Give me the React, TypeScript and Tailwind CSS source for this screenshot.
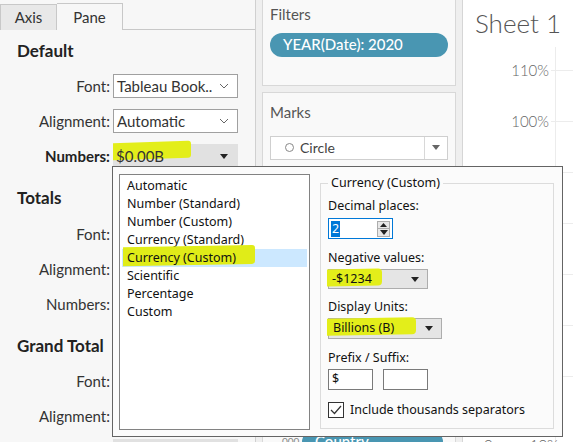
import React from "react";

const lato = { fontFamily: "Lato, 'Open Sans', sans-serif" };
const win = { fontFamily: "'Noto Sans', 'Liberation Sans', sans-serif" };

const Chevron = () => (
  <svg width="10" height="6" viewBox="0 0 10 6" className="shrink-0">
    <path d="M1 1l4 4 4-4" fill="none" stroke="#666" strokeWidth="1" />
  </svg>
);

const Tri = ({ color = "#222" }: { color?: string }) => (
  <svg width="8" height="5" viewBox="0 0 8 5" className="shrink-0">
    <path d="M0 0h8L4 5z" fill={color} />
  </svg>
);

const Row = ({
  label,
  bold,
  gray,
  value,
  mt,
}: {
  label: string;
  bold?: boolean;
  gray?: boolean;
  value?: React.ReactNode;
  mt: string;
}) => (
  <div className={`flex items-center ${mt}`}>
    <div className={`w-[110px] text-right text-[15px] text-[#333] ${bold ? "font-bold" : ""}`}>{label}</div>
    <div
      className={`ml-[3px] flex h-[24px] w-[125px] items-center justify-between pl-[3px] pr-[8px] text-[15px] text-[#333] ${
        gray ? "bg-[#e1e1e1]" : "border border-[#a0a0a0] bg-white"
      }`}
    >
      <span className="relative">{value}</span>
      {gray ? <Tri /> : <Chevron />}
    </div>
  </div>
);

const LeftPanel = () => (
  <div className="w-[256px] shrink-0 border-r border-[#d0d0d0] bg-[#f7f7f7]" style={lato}>
    <div className="flex h-[30px] items-end">
      <div className="flex h-[26px] w-[57px] items-center justify-center border border-b-0 border-[#c8c8c8] bg-[#e8e8e8] text-[15px] text-[#333]">
        Axis
      </div>
      <div className="flex h-[27px] w-[66px] items-center justify-center border-t border-r border-[#c8c8c8] bg-[#f7f7f7] text-[15px] text-[#333]">
        Pane
      </div>
      <div className="h-px flex-1 bg-[#c8c8c8]" />
    </div>
    <div className="pl-[17px]">
      <div className="mt-[11px] h-[20px] text-[17px] leading-[20px] font-bold text-[#222]">Default</div>
    </div>
    <Row mt="mt-[13px]" label="Font:" value="Tableau Book.." />
    <Row mt="mt-[11px]" label="Alignment:" value="Automatic" />
    <div className="mt-[11px] flex items-center">
      <div className="w-[110px] text-right text-[15px] font-bold text-[#222]">Numbers:</div>
      <div className="relative ml-[3px] flex h-[24px] w-[125px] items-center justify-between bg-[#e1e1e1] pl-[3px] pr-[10px] text-[15px] text-[#333]">
        <span className="absolute -top-[2px] left-0 h-[17px] w-[78px] -skew-y-2 rounded-r-[3px] bg-[#e3ee1a]" />
        <span className="relative">$0.00B</span>
        <Tri />
      </div>
    </div>
    <div className="pl-[17px]">
      <div className="mt-[20px] h-[20px] text-[17px] leading-[20px] font-bold text-[#222]">Totals</div>
    </div>
    <Row mt="mt-[14px]" label="Font:" value="Tableau Book.." />
    <Row mt="mt-[11px]" label="Alignment:" value="Automatic" />
    <Row mt="mt-[11px]" label="Numbers:" gray value="Automatic" />
    <div className="pl-[17px]">
      <div className="mt-[20px] h-[20px] text-[17px] leading-[20px] font-bold text-[#222]">Grand Total</div>
    </div>
    <Row mt="mt-[13px]" label="Font:" value="Tableau Book.." />
    <Row mt="mt-[11px]" label="Alignment:" value="Automatic" />
    <Row mt="mt-[11px]" label="Numbers:" gray value="Automatic" />
  </div>
);

const MiddleColumn = () => (
  <div className="flex w-[206px] shrink-0 flex-col bg-[#efefef] px-[6px]" style={lato}>
    <div className="-mt-px h-[87px] shrink-0 border border-[#d8d8d8] bg-[#f9f9f9] px-[7px]">
      <div className="mt-[3px] text-[15px] text-[#555]">Filters</div>
      <div className="mt-[7px] flex h-[24px] items-center rounded-full bg-[#4996b2] pl-[13px] text-[15px] font-medium text-white">
        YEAR(Date): 2020
      </div>
    </div>
    <div className="mt-[6px] flex-1 border border-[#d8d8d8] bg-[#f9f9f9] px-[7px]">
      <div className="mt-[8px] text-[15px] text-[#555]">Marks</div>
      <div className="mt-[12px] flex h-[24px] items-center border border-[#cfcfcf] bg-white text-[14px] text-[#444]">
        <span className="ml-[14px] h-[9px] w-[9px] rounded-full border border-[#888]" />
        <span className="ml-[6px] flex-1">Circle</span>
        <div className="flex h-full w-[23px] items-center justify-center border-l border-[#d8d8d8]">
          <Tri color="#666" />
        </div>
      </div>
      <div className="mt-[270px] flex items-center">
        <span className="w-[32px] pl-[12px] text-[10px] text-[#888]">000</span>
        <div className="flex h-[24px] w-[141px] items-center rounded-full bg-[#4996b2] pl-[13px] text-[15px] font-medium text-white">
          Country
        </div>
      </div>
    </div>
  </div>
);

const ticks = ["110%", "100%", "90%", "80%", "70%", "60%", "50%"];

const Sheet = () => (
  <div className="flex flex-1 flex-col border-l border-[#d6d6d6] bg-white" style={lato}>
    <div className="h-[45px] shrink-0 pt-[8px] pl-[12px] text-[26px] leading-[30px] font-light text-[#555]">Sheet 1</div>
    <div className="relative flex shrink-0 flex-col">
      <div className="absolute top-[2px] bottom-0 left-[92px] w-px bg-[#ececec]" />
      {ticks.map((t) => (
        <div key={t} className="flex h-[51px] shrink-0 items-center">
          <div className="w-[86px] text-right text-[15px] font-light text-[#666]">{t}</div>
          <div className="ml-[2px] h-px flex-1 bg-[#ececec]" />
        </div>
      ))}
      <div className="flex h-[40px] shrink-0 items-end text-[15px] leading-[18px] font-light text-[#666]">
        <span className="ml-[21px] translate-y-[12px]">0</span>
        <span className="ml-[37px] translate-y-[12px]">10%</span>
      </div>
    </div>
  </div>
);

const formats = [
  "Automatic",
  "Number (Standard)",
  "Number (Custom)",
  "Currency (Standard)",
  "Currency (Custom)",
  "Scientific",
  "Percentage",
  "Custom",
];

const Highlight = ({ w }: { w: string }) => (
  <span className={`absolute -top-[1px] -left-[2px] h-[17px] ${w} -skew-y-1 rounded-r-[4px] bg-[#e3ee1a]`} />
);

const FormatPopup = () => (
  <div
    className="absolute top-[166px] left-[112px] flex h-[271px] w-[451px] gap-[10px] border border-[#646464] bg-[#fbfbfb] pt-[7px] pb-[6px] pl-[6px] pr-[8px] text-[12.5px] text-[#111]"
    style={win}
  >
    <div className="w-[191px] border border-[#828282] bg-white px-[2px] pt-[2px]">
      {formats.map((f) => (
        <div
          key={f}
          className={`relative flex h-[18px] items-center pl-[5px] ${f === "Currency (Custom)" ? "bg-[#cce8ff]" : ""}`}
        >
          {f === "Currency (Custom)" && (
            <span className="absolute -top-[3px] left-[1px] h-[19px] w-[132px] -skew-y-1 rounded-r-[3px] bg-[#e0ec18]" />
          )}
          <span className="relative">{f}</span>
        </div>
      ))}
    </div>
    <div className="relative mt-[9px] mb-[1px] flex-1 border border-[#dcdcdc] pl-[7px]">
      <span className="absolute -top-[9px] left-[7px] bg-[#fbfbfb] px-[3px] leading-[16px]">Currency (Custom)</span>
      <div className="mt-[14px] leading-[16px]">Decimal places:</div>
      <div className="mt-[4px] flex h-[21px] w-[65px] items-center border border-[#0078d7] bg-white pl-[2px]">
        <span className="bg-[#0078d7] px-px leading-[16px] text-white">2</span>
        <div className="ml-auto mr-[2px] flex h-[16px] w-[13px] flex-col border border-[#adadad] bg-[#e8e8e8]">
          <div className="flex flex-1 items-center justify-center">
            <svg width="7" height="4" viewBox="0 0 7 4">
              <path d="M0 4h7L3.5 0z" fill="#222" />
            </svg>
          </div>
          <div className="flex flex-1 items-center justify-center border-t border-[#adadad]">
            <Tri />
          </div>
        </div>
      </div>
      <div className="mt-[11px] leading-[16px]">Negative values:</div>
      <div className="mt-[3px] flex h-[20px] w-[100px] items-center justify-between border border-[#adadad] bg-[#e5e5e5] pr-[8px]">
        <span className="relative pl-[3px]">
          <Highlight w="w-[55px]" />
          <span className="relative">-$1234</span>
        </span>
        <Tri />
      </div>
      <div className="mt-[10px] leading-[16px]">Display Units:</div>
      <div className="mt-[3px] flex h-[21px] w-[114px] items-center justify-between border border-[#adadad] bg-[#e5e5e5] pr-[8px]">
        <span className="relative pl-[4px]">
          <Highlight w="w-[89px]" />
          <span className="relative">Billions (B)</span>
        </span>
        <Tri />
      </div>
      <div className="mt-[11px] leading-[16px]">Prefix / Suffix:</div>
      <div className="mt-[3px] flex gap-[10px]">
        <div className="flex h-[21px] w-[45px] items-center border border-[#7a7a7a] bg-white pl-[3px]">$</div>
        <div className="h-[21px] w-[45px] border border-[#7a7a7a] bg-white" />
      </div>
      <div className="mt-[11px] flex items-center">
        <div className="flex h-[16px] w-[16px] items-center justify-center border border-[#333] bg-white">
          <svg width="12" height="10" viewBox="0 0 12 10">
            <path d="M1 5l3.5 3.5L11 1" fill="none" stroke="#333" strokeWidth="1.2" />
          </svg>
        </div>
        <span className="ml-[6px]">Include thousands separators</span>
      </div>
    </div>
  </div>
);

const App: React.FC = () => {
  return (
    <div className="relative flex h-[442px] w-[573px] overflow-hidden bg-white">
      <LeftPanel />
      <MiddleColumn />
      <Sheet />
      <FormatPopup />
    </div>
  );
};

export default App;
